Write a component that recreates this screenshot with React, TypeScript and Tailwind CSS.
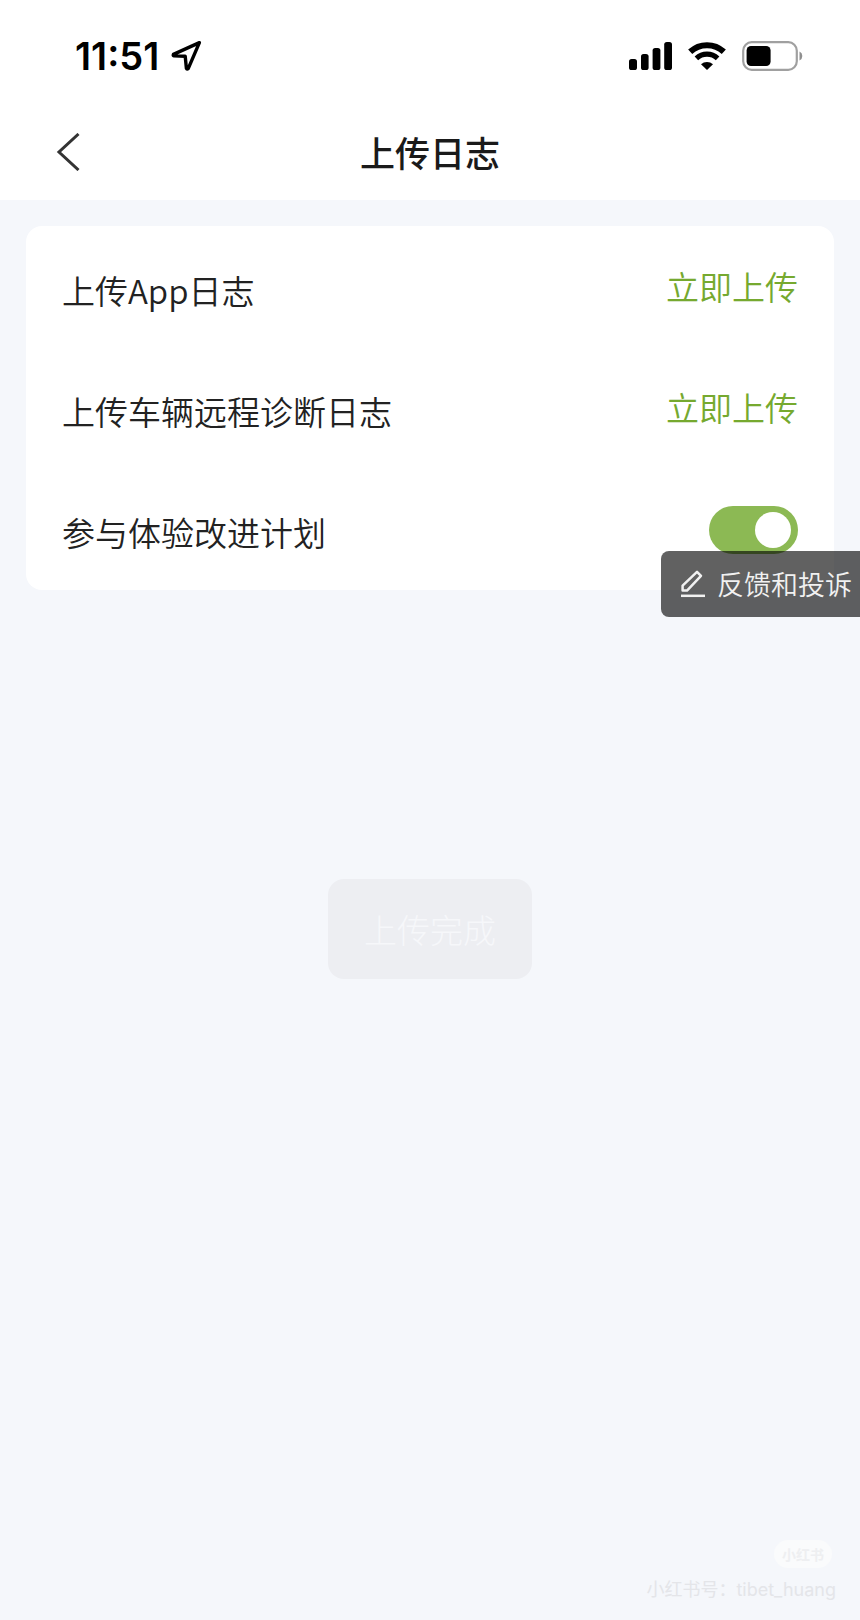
import React, { useState } from 'react';

const LocationIcon: React.FC = () => (
  <svg width="31" height="32" viewBox="0 0 31 32" fill="none" aria-hidden="true">
    <path
      d="M28.4 2.6 L2.4 14.4 Q1.8 15.6 3 15.9 L14.2 16.2 L15.4 28.4 Q16 29.8 17.2 28.6 Z"
      stroke="#000"
      strokeWidth="3.4"
      strokeLinejoin="round"
    />
  </svg>
);

const SignalIcon: React.FC = () => (
  <svg width="43" height="28" viewBox="0 0 43 28" aria-hidden="true">
    <rect x="0" y="17" width="8" height="11" rx="2.6" />
    <rect x="12" y="12" width="7.6" height="16" rx="2.6" />
    <rect x="23.6" y="6" width="7.8" height="22" rx="2.6" />
    <rect x="35.2" y="0" width="7.8" height="28" rx="2.6" />
  </svg>
);

const WifiIcon: React.FC = () => (
  <svg width="38" height="28" viewBox="0 0 38 28" aria-hidden="true">
    <path d="M2.2 9.8 A24.5 24.5 0 0 1 35.8 9.8" fill="none" stroke="#000" strokeWidth="6" />
    <path d="M8.4 16.4 A15.5 15.5 0 0 1 29.6 16.4" fill="none" stroke="#000" strokeWidth="5.2" />
    <path d="M19 28 L13 22.2 A9 9 0 0 1 25 22.2 Z" />
  </svg>
);

const BatteryIcon: React.FC = () => (
  <svg width="61" height="30" viewBox="0 0 61 30" aria-hidden="true">
    <rect x="1.2" y="1.2" width="53.6" height="27.6" rx="8.5" fill="#fff" stroke="#a0a0a0" strokeWidth="2.2" />
    <rect x="4.6" y="5" width="24" height="20" rx="4.4" />
    <path d="M57.5 10.5 A5 5 0 0 1 57.5 19.5 Z" fill="#8f8f8f" />
  </svg>
);

const EditIcon: React.FC = () => (
  <svg
    width="24"
    height="28"
    viewBox="0 0 24 28"
    fill="none"
    stroke="#f1f1f1"
    strokeWidth="2.5"
    strokeLinejoin="round"
    aria-hidden="true"
  >
    <path d="M1.6 20.6 L1.6 15.6 L16 1.8 L20 5.8 L6 20.6 Z" />
    <path d="M0 25.8 H24" />
  </svg>
);

const StatusBar: React.FC = () => (
  <div className="flex h-28 items-center justify-between pr-[57px] pl-[75px]">
    <div className="flex items-center gap-3">
      <span className="font-[Inter,sans-serif] text-[38px] leading-10 font-semibold text-black">11:51</span>
      <LocationIcon />
    </div>
    <div className="flex items-center gap-4">
      <SignalIcon />
      <WifiIcon />
      <BatteryIcon />
    </div>
  </div>
);

interface RowProps {
  label: string;
  children: React.ReactNode;
}

const Row: React.FC<RowProps> = ({ label, children }) => (
  <li className="flex h-[121px] items-center justify-between">
    <span className="pt-1">{label}</span>
    {children}
  </li>
);

const UploadButton: React.FC<{ target: string }> = ({ target }) => (
  <button type="button" aria-label={`立即上传 ${target}`} className="pb-1 text-[#76a92f]">
    立即上传
  </button>
);

export default function App() {
  const [joined, setJoined] = useState(true);

  return (
    <div className="relative min-h-screen overflow-hidden bg-[#f5f7fb] font-['Noto_Sans_CJK_SC',sans-serif] text-[#222]">
      <header className="bg-white">
        <StatusBar />
        <div className="grid h-[88px] grid-cols-[1fr_auto_1fr] items-center px-14 pb-2">
          <button type="button" aria-label="返回" className="justify-self-start">
            <svg width="24" height="38" viewBox="0 0 24 38" fill="none" stroke="#333" strokeWidth="3" aria-hidden="true">
              <path d="M22.5 1 L3 19 L22.5 37" />
            </svg>
          </button>
          <h1 className="text-[35px] leading-10 font-medium text-[#1a1a1a]">上传日志</h1>
        </div>
      </header>

      <main className="px-[26px] pt-[26px]">
        <ul className="rounded-2xl bg-white px-9 pt-px text-[33px] leading-10 font-[350]">
          <Row label="上传App日志">
            <UploadButton target="App日志" />
          </Row>
          <Row label="上传车辆远程诊断日志">
            <UploadButton target="车辆远程诊断日志" />
          </Row>
          <Row label="参与体验改进计划">
            <input
              type="checkbox"
              role="switch"
              aria-label="参与体验改进计划"
              checked={joined}
              onChange={(e) => setJoined(e.target.checked)}
              className="flex h-12 w-[89px] appearance-none items-center rounded-full bg-gray-300 px-[7px] before:size-9 before:rounded-full before:bg-white checked:justify-end checked:bg-[#8cb954]"
            />
          </Row>
        </ul>
      </main>

      {/* floating feedback entry, docked to the right edge */}
      <button
        type="button"
        className="absolute top-[551px] right-0 flex h-[66px] items-center gap-3 rounded-l-lg bg-black/62 pr-2 pl-5 text-[27px] leading-8 font-[350] text-[#f1f1f1]"
      >
        <EditIcon />
        反馈和投诉
      </button>

      {/* toast, almost faded out */}
      <div
        role="status"
        className="absolute top-[879px] left-1/2 -translate-x-1/2 rounded-2xl bg-[#edeef2] px-9 py-[30px] text-[33px] leading-10 font-light whitespace-nowrap text-[#f6f7fa]"
      >
        上传完成
      </div>

      <div className="absolute right-6 bottom-4 flex flex-col items-end gap-2 text-[#e4e5e9]">
        <span className="mr-1 rounded-full bg-[#fafbfc] px-2 text-[14px] leading-7 font-bold text-[#eeeff1]">小红书</span>
        <span className="font-[Inter,'Noto_Sans_CJK_SC',sans-serif] text-[18px] leading-7">小红书号：tibet_huang</span>
      </div>
    </div>
  );
}
